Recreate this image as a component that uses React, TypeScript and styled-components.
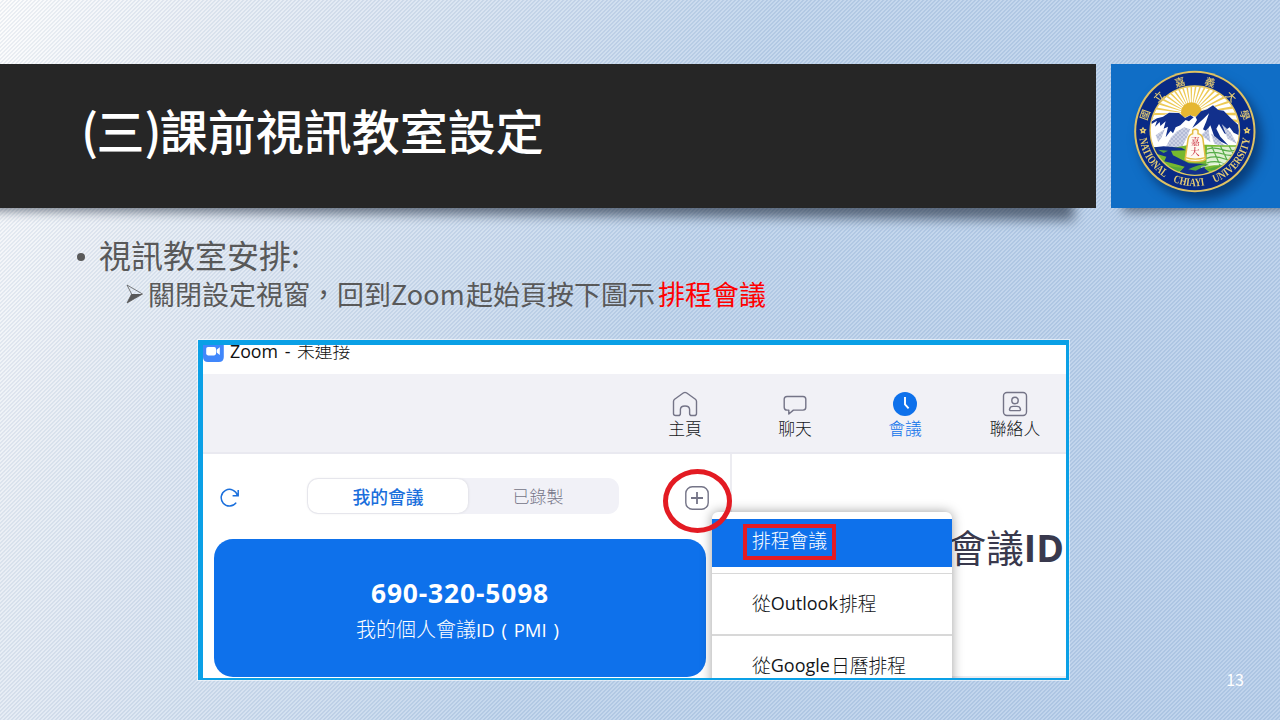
import React from 'react';
import styled, { createGlobalStyle } from 'styled-components';

const GlobalStyle = createGlobalStyle`
  * { box-sizing: border-box; }
  body { margin: 0; }
`;

const cjk = `'Noto Sans CJK TC', sans-serif`;
const ui = `'Open Sans', 'Noto Sans CJK TC', sans-serif`;

const Slide = styled.main`
  position: relative;
  width: 1280px;
  height: 720px;
  overflow: hidden;
  padding-top: 64px;
  font-family: ${cjk};
  background:
    linear-gradient(135deg, rgba(255, 255, 255, 0.13) 25%, rgba(70, 110, 160, 0.09) 25% 50%, rgba(255, 255, 255, 0.13) 50% 75%, rgba(70, 110, 160, 0.09) 75%) 0 0 / 4px 4px,
    linear-gradient(112deg, #fcfcfc 0%, #e8edf4 14%, #d2dfef 32%, #bdd2ea 50%, #b6cde9 100%);
`;

const Header = styled.header`
  display: flex;
  gap: 15px;
  height: 144px;
`;

const Block = styled.div<{ $width: number }>`
  position: relative;
  isolation: isolate;
  width: ${p => p.$width}px;
  height: 144px;
`;

const BlockShadow = styled.div<{ $left: number; $right: number; $tilt: number; $drop: number }>`
  position: absolute;
  z-index: -1;
  left: ${p => p.$left}px;
  right: ${p => p.$right}px;
  bottom: 0;
  height: 40px;
  background: rgba(30, 42, 60, 0.62);
  filter: blur(6px);
  transform-origin: 0 100%;
  transform: translateY(${p => p.$drop}px) rotate(${p => p.$tilt}deg);
`;

const TitleFace = styled.div`
  display: flex;
  align-items: center;
  height: 100%;
  padding: 0 0 15px 81px;
  background: #262626;
`;

const Title = styled.h1`
  margin: 0;
  color: #fff;
  font-size: 48px;
  font-weight: 500;
  line-height: 60px;
  white-space: nowrap;
`;

const Paren = styled.span<{ $shift: number }>`
  letter-spacing: ${p => p.$shift}px;
`;

const LogoFace = styled.div`
  height: 100%;
  padding: 6px 0 0 22.3px;
  background: #106ec6;
  overflow: hidden;
`;

const Seal = styled.svg`
  display: block;
  overflow: visible;
  filter: drop-shadow(6px 8px 6px rgba(0, 20, 60, 0.55));
`;

const Outline = styled.section`
  display: flex;
  flex-direction: column;
  height: 132px;
  padding: 27px 0 0 76px;
  color: #595959;
  white-space: nowrap;
`;

const Bullet = styled.div`
  display: flex;
  align-items: center;
  height: 39px;
  font-size: 32px;
  line-height: 39px;
  font-weight: 400;
`;

const Dot = styled.span`
  width: 8px;
  height: 8px;
  margin: 5px 14px 0 1px;
  border-radius: 50%;
  background: #595959;
`;

const SubBullet = styled.div`
  display: flex;
  align-items: center;
  height: 40px;
  padding-left: 49px;
  font-size: 27px;
  line-height: 40px;
  svg { margin-right: 4px; }
`;

const Product = styled.span`
  display: inline-block;
  width: 75px;
  letter-spacing: 0.1px;
`;

const Emphasis = styled.span`
  margin-left: 3px;
  color: #f00;
`;

const AppWindow = styled.section`
  position: relative;
  width: 871px;
  height: 340px;
  margin-left: 198px;
  display: flex;
  flex-direction: column;
  border-style: solid;
  border-color: #0aa0e6;
  border-width: 5px 3px 2px 5px;
  outline: 1px solid rgba(255, 255, 255, 0.55);
  background: #fff;
  font-family: ${ui};
  overflow: hidden;
  white-space: nowrap;
`;

const TitleBar = styled.div`
  display: flex;
  height: 29px;
  overflow: hidden;
  color: #111;
  font-size: 17.8px;
  line-height: 24px;
  gap: 6px;
`;

const TitleText = styled.span`
  margin-top: -6px;
  font-weight: 300;
  word-spacing: 2px;
`;

const Latin = styled.span`
  font-weight: 400;
`;

const Nav = styled.nav`
  display: flex;
  justify-content: flex-end;
  height: 80px;
  background: #f1f1f6;
  border-bottom: 2px solid #e9e9f0;
`;

const NavItem = styled.div<{ $active?: boolean }>`
  display: flex;
  flex-direction: column;
  align-items: center;
  flex: none;
  width: 110px;
  padding-top: 17px;
  color: ${p => (p.$active ? '#0e71eb' : '#131619')};
  font-size: 16.8px;
  line-height: 24px;
  font-weight: 300;
  &:last-child { margin-right: -4px; }
  svg { display: block; }
`;

const Body = styled.div`
  display: flex;
  height: 224px;
`;

const Meetings = styled.div`
  width: 529px;
  border-right: 2px solid #ececf1;
`;

const Toolbar = styled.div`
  display: flex;
  align-items: center;
  height: 85px;
  padding: 2px 0 0 16px;
`;

const Tabs = styled.div`
  display: flex;
  width: 312px;
  height: 36px;
  margin: -3px 66px 0 67px;
  padding: 1px;
  border-radius: 11px;
  background: #f1f1f7;
`;

const Tab = styled.div<{ $active?: boolean }>`
  width: ${p => (p.$active ? 160 : 140)}px;
  height: 34px;
  border-radius: 10px;
  background: ${p => (p.$active ? '#fff' : 'transparent')};
  box-shadow: ${p => (p.$active ? '0 0 3px rgba(0,0,0,.12)' : 'none')};
  color: ${p => (p.$active ? '#1a6fdc' : '#747487')};
  font-size: ${p => (p.$active ? 17.8 : 17)}px;
  font-weight: ${p => (p.$active ? 500 : 300)};
  line-height: 36px;
  text-align: center;
`;

const Card = styled.div`
  width: 492px;
  height: 138px;
  margin-left: 11px;
  padding-top: 36px;
  border-radius: 19px;
  background: #0e71eb;
  color: #fff;
  text-align: center;
`;

const MeetingId = styled.div`
  font-size: 26.4px;
  font-weight: 700;
  line-height: 36px;
  letter-spacing: 0.85px;
`;

const MeetingLabel = styled.div`
  margin-left: -5px;
  font-size: 20px;
  font-weight: 300;
  line-height: 38px;
  ${Latin} {
    font-size: 18.5px;
    word-spacing: 2px;
  }
`;

const Detail = styled.div`
  flex: 1;
  padding: 67px 2px 0 0;
  border-bottom: 2px solid #ececf1;
  color: #39394d;
  font-size: 37.5px;
  line-height: 54px;
  text-align: right;
`;

const Menu = styled.div`
  position: absolute;
  left: 509px;
  top: 167px;
  width: 240px;
  height: 180px;
  padding-top: 7px;
  border-radius: 6px;
  background: #fff;
  box-shadow: 0 0 12px rgba(0, 0, 0, 0.38);
  font-size: 18.8px;
`;

const MenuItem = styled.div<{ $selected?: boolean; $height: number }>`
  display: flex;
  align-items: center;
  height: ${p => p.$height}px;
  padding-left: ${p => (p.$selected ? 31 : 40)}px;
  padding-bottom: ${p => (p.$selected ? 0 : 3)}px;
  background: ${p => (p.$selected ? '#0e71eb' : 'transparent')};
  color: ${p => (p.$selected ? '#fff' : '#131619')};
  font-weight: 300;
  ${Latin} {
    font-size: 18px;
    margin-right: 1px;
  }
`;

const MenuRule = styled.div<{ $thick: number; $top?: number }>`
  height: ${p => p.$thick}px;
  margin-top: ${p => p.$top ?? 0}px;
  background: #d8d8d8;
`;

const Highlight = styled.span`
  height: 36px;
  width: 93px;
  margin-top: -2px;
  padding-left: 5px;
  border: 4px solid #e31b23;
  line-height: 27px;
`;

const RedRing = styled.div`
  position: absolute;
  left: 460px;
  top: 124px;
  width: 69px;
  height: 64px;
  border: 5px solid #e31b23;
  border-radius: 50%;
`;

const PageNumber = styled.span`
  position: absolute;
  right: 36px;
  bottom: 29px;
  color: #fff;
  font-size: 16px;
  line-height: 24px;
`;

const sealCharacters = [
  { ch: '國', x: 166, y: 195, turn: -70 },
  { ch: '立', x: 208, y: 140, turn: -44 },
  { ch: '嘉', x: 271, y: 97, turn: -16 },
  { ch: '義', x: 361, y: 97, turn: 16 },
  { ch: '大', x: 424, y: 140, turn: 44 },
  { ch: '學', x: 465, y: 195, turn: 70 },
];

const rays = Array.from({ length: 23 }, (_, i) => {
  const a = Math.PI + (i - 1) * (Math.PI / 20);
  const half = 0.03;
  const r = 175;
  return `M305 192L${305 + r * Math.cos(a - half)} ${192 + r * Math.sin(a - half)}L${305 + r * Math.cos(a + half)} ${192 + r * Math.sin(a + half)}Z`;
}).join('');

const UniversitySeal = () => (
  <Seal width="124" height="124" viewBox="130 60 372 372">
    <defs>
      <clipPath id="inner"><circle cx="315.5" cy="242" r="132" /></clipPath>
      <path id="motto" d="M147.5 240.5A168 168 0 0 0 483.5 240.5" />
      <pattern id="hatch" width="4" height="4" patternUnits="userSpaceOnUse">
        <rect width="4" height="4" fill="#f4f6fb" />
        <path d="M0 0h2v2h-2zM2 2h2v2h-2z" fill="#8c97bf" />
      </pattern>
    </defs>
    <circle cx="315.5" cy="244.5" r="182" fill="#dfc263" />
    <circle cx="315.5" cy="244.5" r="176" fill="#082a86" />
    <circle cx="315.5" cy="242" r="136" fill="#e4c765" />
    <g clipPath="url(#inner)">
      <circle cx="315.5" cy="242" r="132" fill="#fff" />
      <path d={rays} fill="#edca55" />
      <circle cx="305" cy="188" r="31" fill="#e5b732" />
      <path d="M180 212L210 200L237 190L262 188L285 203L300 196L318 200L345 178L372 166L388 182L402 184L424 206L450 226V300H180Z" fill="#fff" />
      <path d="M183 216L202 205L220 200L238 188L268 189L286 204L302 196L312 202L298 214L288 210L272 226L258 232L250 250L243 242L228 262L235 230L222 236L228 214L212 228L210 216L196 230L202 212L186 222Z" fill="#12308c" />
      <path d="M318 202L334 184L352 178L370 166L386 180L402 182L424 205L446 225L452 258L432 248L420 232L408 240L424 262L404 250L388 222L380 236L392 260L416 286L376 266L362 226L350 244L340 238L350 214L358 190L340 208L324 222L308 234L322 210Z" fill="#12308c" />
      <path d="M228 292L244 262L262 244L284 232L302 238L292 262L278 290ZM198 256L226 236L216 262L206 276ZM374 282L364 250L384 266L410 290ZM396 222L422 246L442 282L414 266ZM334 256L356 234L362 276Z" fill="url(#hatch)" />
      <path d="M180 292H260L300 284H350L395 286H450V380H180Z" fill="#76b82f" />
      <path d="M352 290H450V336L400 346H350Z" fill="#def0d2" />
      <path d="M350 298Q375 290 398 299T446 298M348 311Q375 303 400 312T448 310M350 325Q378 316 403 326T446 322M350 339Q378 330 403 340T440 335M366 289L392 348M392 287L418 342M418 287L438 326" fill="none" stroke="#57ad49" strokeWidth="3.5" />
      <path d="M180 293L222 289L275 293L289 301L244 302L250 316L278 330L298 340L352 342L344 354L366 372L300 380L270 366L285 350L256 342L224 334L230 320L202 312Z" fill="#12308c" />
      <path d="M205 299L235 302L222 309ZM215 344L252 350L280 354L260 370ZM296 358Q322 343 359 341L318 362ZM348 359L405 342L392 361Z" fill="#55a83c" />
      <path d="M334 352L405 337" stroke="#fff" strokeWidth="2" />
    </g>
    <path d="M309 251V241Q317 234 325 241V251Q338 253 340 268L347 324Q350 329 340 332Q317 338 293 332Q284 330 287 324L295 268Q298 253 309 251Z" fill="#fffaf0" stroke="#e3bd45" strokeWidth="4.5" />
    <path d="M288 323Q317 332 346 323" fill="none" stroke="#e3bd45" strokeWidth="3.5" />
    <g fill="#c9283a" fontFamily="'Noto Serif CJK TC', 'Noto Sans CJK TC', sans-serif" fontWeight="500" fontSize="27" textAnchor="middle">
      <text x="317" y="285">嘉</text>
      <text x="316" y="315">大</text>
    </g>
    <g fill="#e6cc72" fontFamily="'Noto Sans CJK TC', sans-serif" fontWeight="500" fontSize="31" textAnchor="middle">
      {sealCharacters.map(c => (
        <text key={c.ch} transform={`translate(${c.x} ${c.y}) rotate(${c.turn})`} y="11">{c.ch}</text>
      ))}
    </g>
    <g fill="#e6cc72" fontFamily="'Liberation Serif', serif" fontWeight="700" fontSize="34">
      <text><textPath href="#motto" startOffset="26" textLength="142" lengthAdjust="spacingAndGlyphs">NATIONAL</textPath></text>
      <text><textPath href="#motto" startOffset="196" textLength="98" lengthAdjust="spacingAndGlyphs">CHIAYI</textPath></text>
      <text><textPath href="#motto" startOffset="324" textLength="178" lengthAdjust="spacingAndGlyphs">UNIVERSITY</textPath></text>
    </g>
    {[160, 472].map(x => (
      <g key={x} transform={`translate(${x} 241)`}>
        <path d="M0 -11L4 -4L11 -3L6 3L7 10L0 7L-7 10L-6 3L-11 -3L-4 -4Z" fill="#e6cc72" />
        <circle r="2.5" fill="#082a86" />
      </g>
    ))}
  </Seal>
);

const iconStroke = { fill: 'none', stroke: '#747487', strokeWidth: 1.4, strokeLinejoin: 'round' as const };

const HomeIcon = () => (
  <svg width="26" height="26" viewBox="0 0 26 26" {...iconStroke}>
    <path d="M1.5 10.6Q1.5 9.2 2.6 8.3L11.6 1.8Q13 .9 14.4 1.8L23.4 8.3Q24.5 9.2 24.5 10.6V22.4Q24.5 24.5 22.4 24.5H19.6Q17.6 24.5 17.6 22.4V18.6Q17.6 15 13 15T8.4 18.6V22.4Q8.4 24.5 6.4 24.5H3.6Q1.5 24.5 1.5 22.4Z" />
  </svg>
);

const ChatIcon = () => (
  <svg width="26" height="26" viewBox="0 0 26 26" {...iconStroke}>
    <path d="M5 5.5H21Q23.8 5.5 23.8 8.3V16.3Q23.8 19.1 21 19.1H11.4L6.8 23V19.1H5Q2.2 19.1 2.2 16.3V8.3Q2.2 5.5 5 5.5Z" />
  </svg>
);

const ClockIcon = () => (
  <svg width="26" height="26" viewBox="0 0 26 26" fill="none">
    <circle cx="13" cy="13" r="12" fill="#0e71eb" />
    <path d="M13 6V13.4L16.6 17.4" stroke="#fff" strokeWidth="1.9" />
  </svg>
);

const ContactsIcon = () => (
  <svg width="26" height="26" viewBox="0 0 26 26" {...iconStroke}>
    <rect x="1.5" y="1.5" width="23" height="23" rx="3.5" />
    <circle cx="13" cy="9.5" r="3.2" />
    <path d="M7.5 18.3Q8 15.4 11 15.4H15Q18 15.4 18.5 18.3Q18.6 19.6 17.2 19.6H8.8Q7.4 19.6 7.5 18.3Z" />
  </svg>
);

const CameraLogo = () => (
  <svg width="21" height="17" viewBox="0 0 21 17">
    <path d="M0 0H20.8V12Q20.8 17 15.8 17H5Q0 17 0 12Z" fill="#4087fb" />
    <rect x="3.2" y="2" width="9.8" height="8.4" rx="1.8" fill="#fff" />
    <path d="M13.6 4.8L16.8 2.2V10L13.6 7.4Z" fill="#fff" />
  </svg>
);

const RefreshIcon = () => (
  <svg width="21" height="20" viewBox="0 0 21 20" fill="none" stroke="#1a6fdc" strokeWidth="1.5">
    <path d="M17.2 14.6A8.3 8.3 0 1 1 18.5 7.5M19.2 2V7.7H13.6" />
  </svg>
);

const PlusIcon = () => (
  <svg width="24" height="24" viewBox="0 0 24 24" {...iconStroke}>
    <rect x=".8" y=".8" width="22.4" height="22.4" rx="6.5" />
    <path d="M12 6V18M6 12H18" strokeWidth="1.8" />
  </svg>
);

const ArrowBullet = () => (
  <svg width="19" height="20" viewBox="0 0 19 20">
    <path d="M2 1L17.5 10L2 19L6.6 10Z" fill="none" stroke="#595959" strokeWidth="0.8" />
    <path d="M6.6 10H17.5L2 19Z" fill="#595959" />
  </svg>
);

export default function App() {
  return (
    <Slide>
      <GlobalStyle />
      <Header>
        <Block $width={1096}>
          <BlockShadow $left={-20} $right={22} $tilt={0.55} $drop={2} />
          <TitleFace>
            <Title><Paren $shift={-1.5}>(</Paren>三<Paren $shift={-2}>)</Paren>課前視訊教室設定</Title>
          </TitleFace>
        </Block>
        <Block $width={169}>
          <BlockShadow $left={12} $right={-20} $tilt={-1} $drop={4} />
          <LogoFace><UniversitySeal /></LogoFace>
        </Block>
      </Header>

      <Outline>
        <Bullet><Dot />視訊教室安排:</Bullet>
        <SubBullet>
          <ArrowBullet />
          關閉設定視窗，回到<Product>Zoom</Product>起始頁按下圖示<Emphasis>排程會議</Emphasis>
        </SubBullet>
      </Outline>

      <AppWindow>
        <TitleBar>
          <CameraLogo />
          <TitleText><Latin>Zoom - </Latin>未連接</TitleText>
        </TitleBar>
        <Nav>
          <NavItem><HomeIcon />主頁</NavItem>
          <NavItem><ChatIcon />聊天</NavItem>
          <NavItem $active><ClockIcon />會議</NavItem>
          <NavItem><ContactsIcon />聯絡人</NavItem>
        </Nav>
        <Body>
          <Meetings>
            <Toolbar>
              <RefreshIcon />
              <Tabs>
                <Tab $active>我的會議</Tab>
                <Tab>已錄製</Tab>
              </Tabs>
              <PlusIcon />
            </Toolbar>
            <Card>
              <MeetingId>690-320-5098</MeetingId>
              <MeetingLabel>我的個人會議<Latin>ID ( PMI )</Latin></MeetingLabel>
            </Card>
          </Meetings>
          <Detail>會議<b>ID</b></Detail>
        </Body>
        <Menu>
          <MenuItem $selected $height={48}><Highlight>排程會議</Highlight></MenuItem>
          <MenuRule $thick={1} $top={6} />
          <MenuItem $height={60}>從<Latin>Outlook</Latin>排程</MenuItem>
          <MenuRule $thick={2} />
          <MenuItem $height={60}>從<Latin>Google</Latin>日曆排程</MenuItem>
        </Menu>
        <RedRing />
      </AppWindow>
      <PageNumber>13</PageNumber>
    </Slide>
  );
}
